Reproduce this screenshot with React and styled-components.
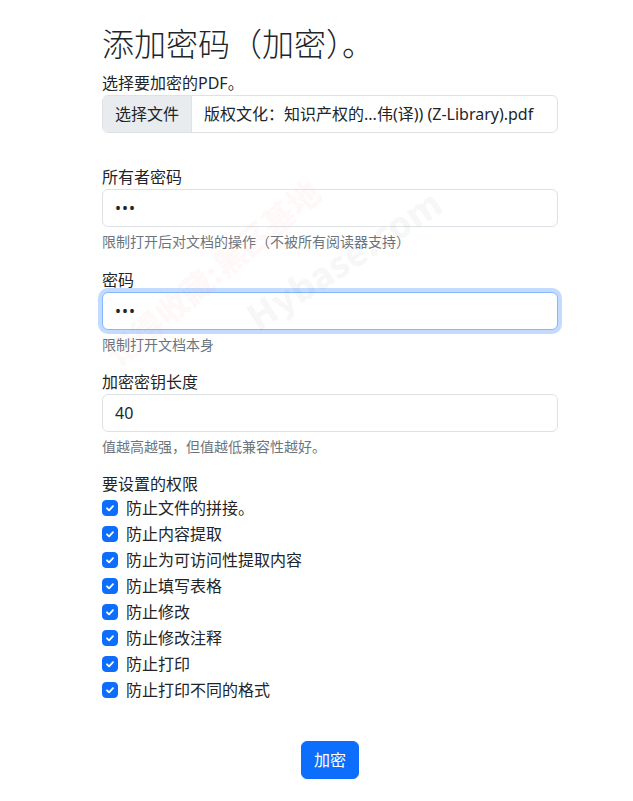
import styled, { createGlobalStyle } from 'styled-components'

const GlobalStyle = createGlobalStyle`
	body {
		margin: 0;
		background: #fff;
		color: #212529;
		font-family: "Noto Sans", "Noto Sans CJK SC", sans-serif;
		font-size: 16px;
		line-height: 1.5;
	}
	* { box-sizing: border-box; }
`

const Page = styled.div`
	position: relative;
	padding: 25px 0 20px 102px;
	min-height: 801px;
	overflow: hidden;
`

const Form = styled.form`
	width: 456px;
	display: flex;
	flex-direction: column;
`

const Title = styled.h1`
	margin: 0 0 8px;
	font-size: 32px;
	font-weight: 300;
	line-height: 1.2;
`

const Group = styled.div`
	display: flex;
	flex-direction: column;
	margin-bottom: ${p => p.$gap ?? 16}px;
`

const Label = styled.label`
	display: block;
	font-size: 16px;
	line-height: 24px;
`

const Input = styled.input`
	display: block;
	width: 100%;
	height: 38px;
	padding: 6px 12px;
	font: inherit;
	font-size: 16px;
	color: #212529;
	background: #fff;
	border: 1px solid ${p => (p.$focused ? '#86b7fe' : '#dee2e6')};
	border-radius: 6px;
	outline: none;
	box-shadow: ${p => (p.$focused ? '0 0 0 4px rgba(13,110,253,.25)' : 'none')};
	letter-spacing: ${p => (p.type === 'password' ? '1px' : 'normal')};
`

const FileControl = styled.div`
	display: flex;
	align-items: stretch;
	height: 38px;
	border: 1px solid #dee2e6;
	border-radius: 6px;
	overflow: hidden;
	background: #fff;
`

const FileButton = styled.span`
	display: flex;
	align-items: center;
	padding: 0 12px;
	background: #e9ecef;
	border-right: 1px solid #dee2e6;
	white-space: nowrap;
`

const FileName = styled.span`
	display: flex;
	align-items: center;
	padding: 0 12px;
	white-space: nowrap;
	overflow: hidden;
`

const Help = styled.div`
	margin-top: 4px;
	font-size: 14px;
	line-height: 21px;
	color: #6c757d;
`

const Check = styled.label`
	display: flex;
	align-items: center;
	gap: 8px;
	min-height: 24px;
	margin-bottom: 2px;
`

const Box = styled.span`
	width: 16px;
	height: 16px;
	flex: none;
	display: flex;
	align-items: center;
	justify-content: center;
	border-radius: 4px;
	background: #0d6efd;
	border: 1px solid #0d6efd;
`

const Actions = styled.div`
	display: flex;
	justify-content: center;
	margin-top: 37px;
`

const Button = styled.button`
	height: 38px;
	padding: 6px 12px;
	font: inherit;
	font-size: 16px;
	color: #fff;
	background: #0d6efd;
	border: 1px solid #0d6efd;
	border-radius: 6px;
`

const Watermark = styled.div`
	position: absolute;
	left: ${p => p.$x}px;
	top: ${p => p.$y}px;
	transform: translate(-50%, -50%) rotate(${p => p.$deg}deg);
	font-family: "Noto Sans CJK SC", "Noto Sans", sans-serif;
	font-weight: 900;
	font-size: ${p => p.$size}px;
	color: ${p => p.$color};
	white-space: nowrap;
	pointer-events: none;
`

const permissions = [
	'防止文件的拼接。',
	'防止内容提取',
	'防止为可访问性提取内容',
	'防止填写表格',
	'防止修改',
	'防止修改注释',
	'防止打印',
	'防止打印不同的格式',
]

const CheckMark = () => (
	<svg width="12" height="12" viewBox="0 0 20 20">
		<path d="M5 10.5l3.5 3.5l6.5-7" fill="none" stroke="#fff" strokeWidth="3" strokeLinecap="round" strokeLinejoin="round" />
	</svg>
)

export default function App() {
	return (
		<Page>
			<GlobalStyle />
			<Form onSubmit={e => e.preventDefault()}>
				<Title>添加密码（加密）。</Title>
				<Group $gap={32}>
					<Label>选择要加密的PDF。</Label>
					<FileControl>
						<FileButton>选择文件</FileButton>
						<FileName>版权文化：知识产权的...伟(译)) (Z-Library).pdf</FileName>
					</FileControl>
				</Group>
				<Group>
					<Label>所有者密码</Label>
					<Input type="password" defaultValue="abc" />
					<Help>限制打开后对文档的操作（不被所有阅读器支持）</Help>
				</Group>
				<Group $gap={15}>
					<Label>密码</Label>
					<Input type="password" defaultValue="abc" $focused />
					<Help>限制打开文档本身</Help>
				</Group>
				<Group $gap={15}>
					<Label>加密密钥长度</Label>
					<Input type="text" defaultValue="40" />
					<Help>值越高越强，但值越低兼容性越好。</Help>
				</Group>
				<Group $gap={0}>
					<Label>要设置的权限</Label>
					{permissions.map(text => (
						<Check key={text}>
							<Box><CheckMark /></Box>
							{text}
						</Check>
					))}
				</Group>
				<Actions>
					<Button type="submit">加密</Button>
				</Actions>
			</Form>
			<Watermark $x={212} $y={272} $deg={-40} $size={32} $color="rgba(255,60,40,0.05)">记得收藏:黑区基地</Watermark>
			<Watermark $x={343} $y={258} $deg={-33} $size={36} $color="rgba(0,0,0,0.04)">Hybase.com</Watermark>
		</Page>
	)
}
